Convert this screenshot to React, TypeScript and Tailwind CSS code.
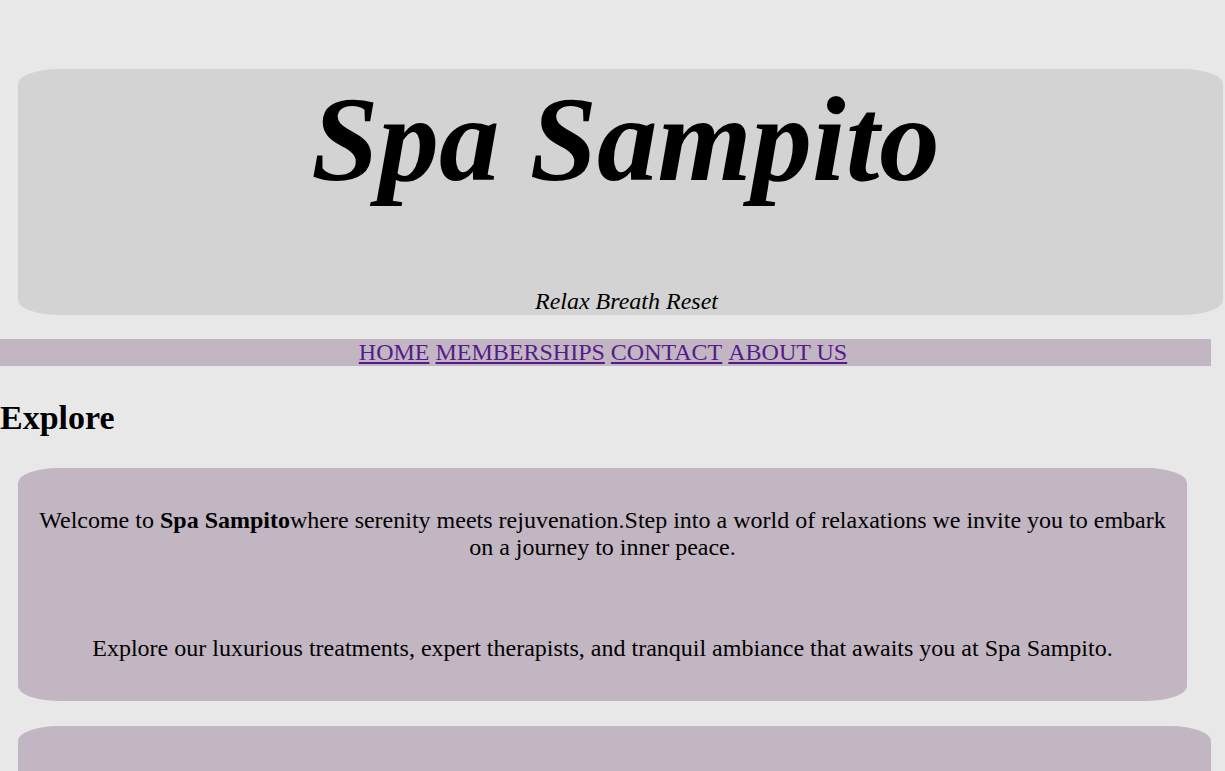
export default function App() {
  const serif = "font-[family-name:'Liberation_Serif',serif]"
  return (
    <div className={`min-h-[771px] w-full overflow-hidden bg-[#e8e8e8] text-black ${serif}`}>
      <div className="w-[1211px] pt-[69px]">
        <header className="ml-[18px] flex h-[246px] w-[1205px] flex-col items-center rounded-[40px/15px] bg-[#d3d3d3]">
          <h1 className="mt-[3px] pl-[10px] text-[121px] font-bold italic leading-[134px]">Spa Sampito</h1>
          <p className="mt-auto mb-0 pl-[12px] text-[24px] italic leading-[27px]">Relax Breath Reset</p>
        </header>

        <nav className="mt-[24px] flex h-[27px] justify-center gap-[6px] bg-[#c3b6c3] pr-[5px] text-[24px] leading-[27px] text-[#551a8b]">
          <a href="#" className="underline">HOME</a>
          <a href="#" className="underline">MEMBERSHIPS</a>
          <a href="#" className="underline">CONTACT</a>
          <a href="#" className="underline">ABOUT US</a>
        </nav>

        <h2 className="mt-[32px] text-[34px] font-bold leading-[39px]">Explore</h2>

        <section className="mt-[31px] ml-[18px] w-[1169px] rounded-[40px/15px] bg-[#c3b6c3] px-[18px] pt-[39px] pb-[39px] text-center text-[24px] leading-[27px]">
          <p>
            Welcome to <b>Spa Sampito</b>where serenity meets rejuvenation.Step into a world of relaxations we invite you to embark on a journey to inner peace.
          </p>
          <p className="mt-[74px]">
            Explore our luxurious treatments, expert therapists, and tranquil ambiance that awaits you at Spa Sampito.
          </p>
        </section>

        <section className="mt-[25px] ml-[18px] h-[200px] w-[1193px] rounded-[40px/15px] bg-[#c3b6c3]" />
      </div>
    </div>
  )
}
